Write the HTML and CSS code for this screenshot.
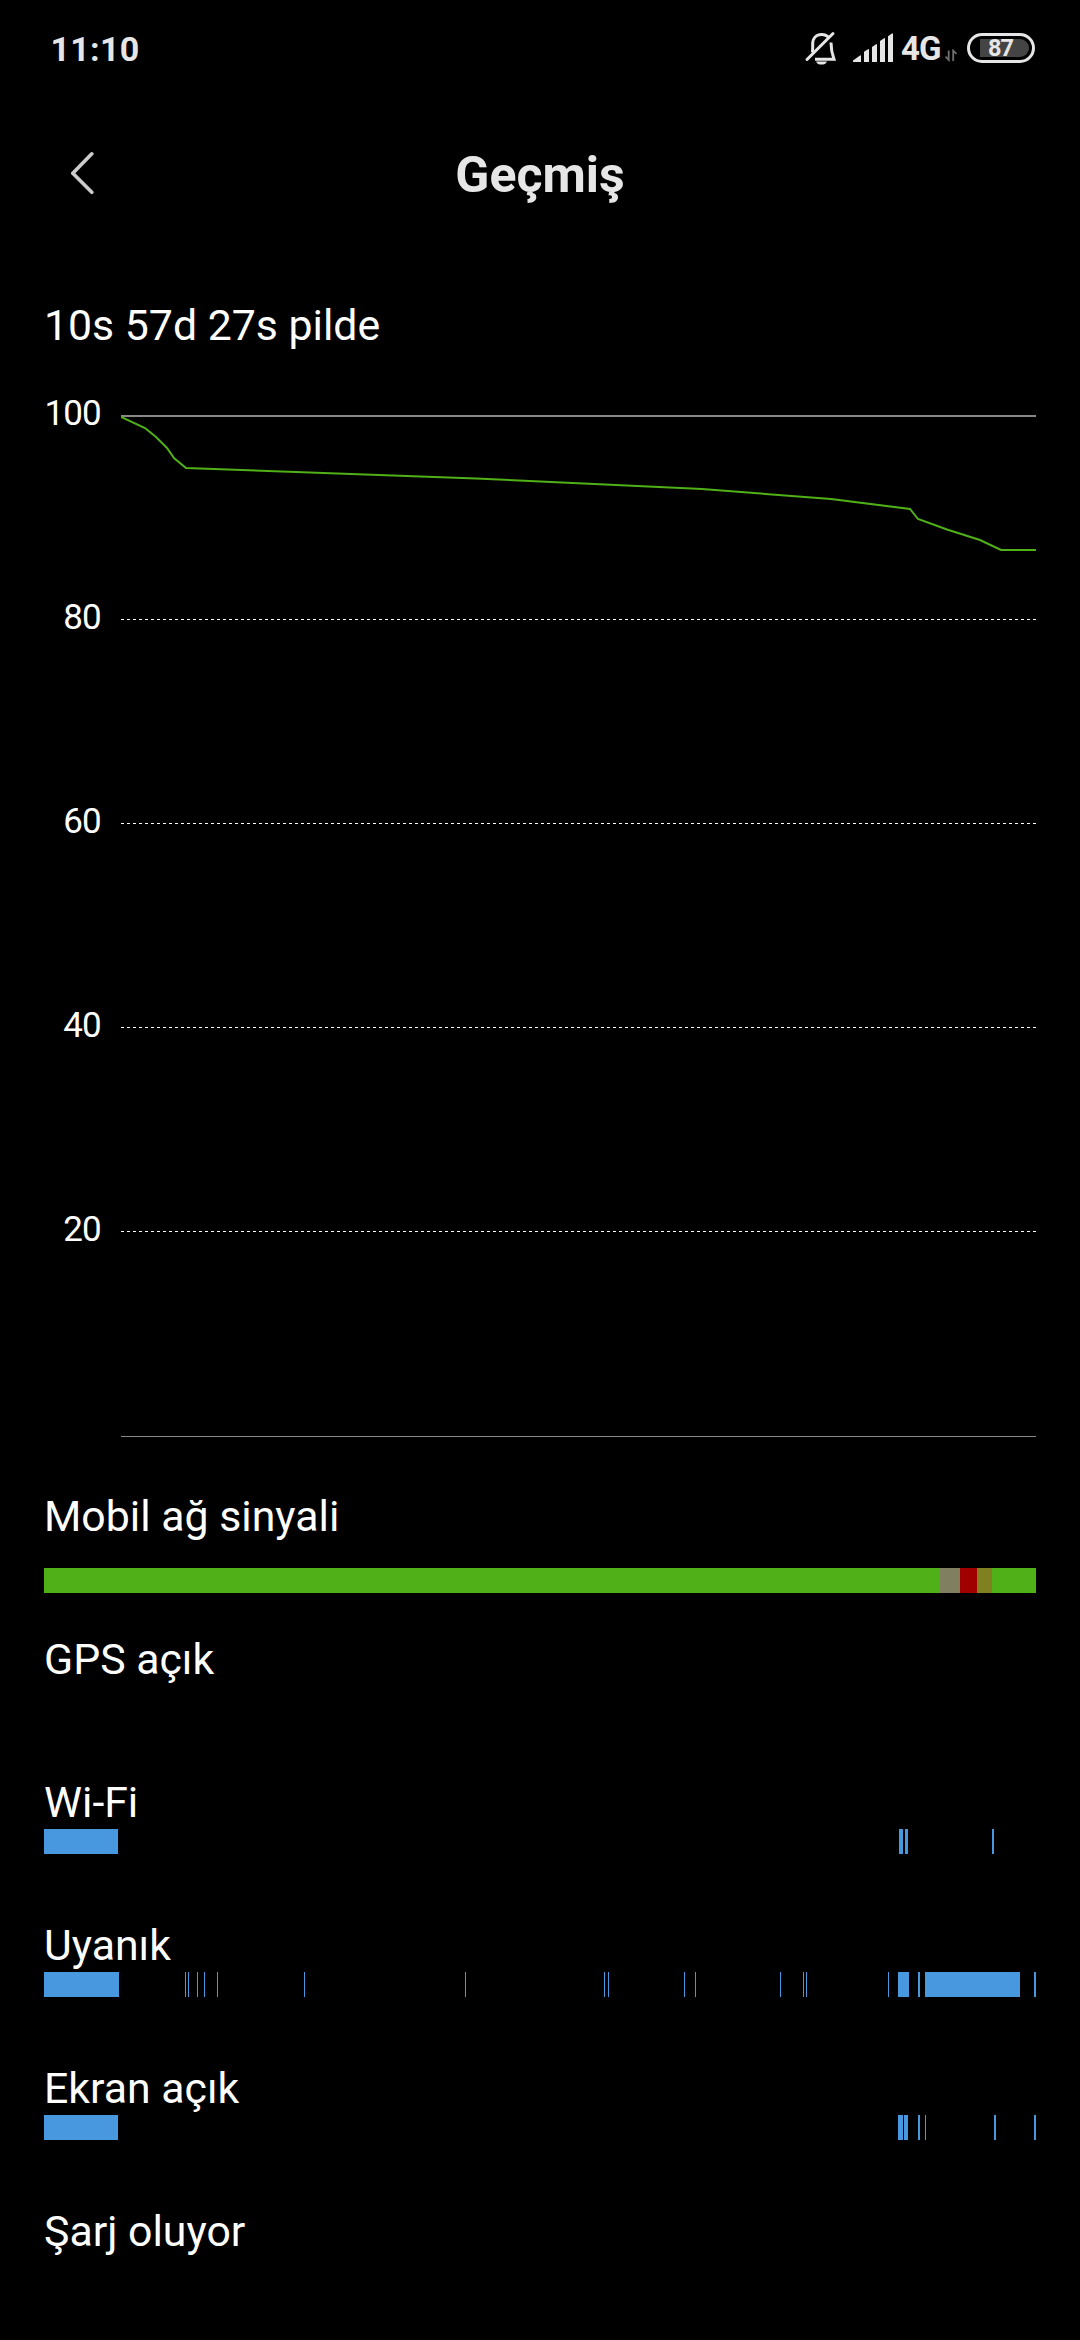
FILE: index.html
```html
<!DOCTYPE html>
<html lang="tr">
<head>
<meta charset="utf-8">
<title>Geçmiş</title>
<link rel="stylesheet" href="styles.css">
</head>
<body>
<div class="status-bar">
  <span class="clock">11:10</span>
  <div class="status-icons">
    <svg class="bell" width="34" height="34" viewBox="0 0 34 34" fill="none" stroke="#e6e6e6" stroke-width="3">
      <path d="M8.2 21.5C8.8 20 8.700 17 8.700 13C8.700 7 12.500 3.500 17.500 3.500C21 3.500 23.500 5 24.800 7"/>
      <path d="M27 11.500C27 16 27 20 30 28.300H11"/>
      <path d="M3 28.500L29 2.500" stroke-linecap="round"/>
      <path d="M12 30.500H23C22 33 20 33.500 17.500 33.500C15 33.500 13 33 12 30.500Z" fill="#e6e6e6" stroke="none"/>
    </svg>
    <svg class="signal" width="40" height="29" viewBox="0 0 40 29" fill="#e6e6e6">
      <path d="M0 29V27.500L7 22.500Q8 22 8 23V29Z"/>
      <path d="M11 29V18.800L15 16.200Q16 15.800 16 17V29Z"/>
      <path d="M19 29V14L23 11.200Q24 10.800 24 12V29Z"/>
      <path d="M27 29V8L31 5.200Q32 4.800 32 6V29Z"/>
      <path d="M35 29V3.200L39 .5Q40 0 40 1V29Z"/>
    </svg>
    <span class="network">4G</span>
    <svg class="traffic" width="12" height="13" viewBox="0 0 12 13" fill="none" stroke="#707070" stroke-width="1.800">
      <path d="M3.700 1.500V11L.5 7.500M8.200 12V1.500L11.500 5"/>
    </svg>
    <div class="battery"><span class="battery-level">87</span></div>
  </div>
</div>
<header class="title-bar">
  <svg class="back" width="24" height="44" viewBox="0 0 24 44" fill="none" stroke="#ccc" stroke-width="3.600" stroke-linecap="round" stroke-linejoin="round">
    <path d="M20.800 2.800L1.800 22.200L20.800 41.300"/>
  </svg>
  <h1 class="title">Geçmiş</h1>
</header>
<main class="content">
  <p class="label">10s 57d 27s pilde</p>
  <section class="chart">
    <div class="axis">
      <span>100</span><span>80</span><span>60</span><span>40</span><span>20</span>
    </div>
    <svg class="plot" width="915" height="1022" viewBox="0 0 915 1022">
      <path d="M0 1H915" stroke="#888" stroke-width="2"/>
      <path d="M0 204.500H915M0 408.500H915M0 612.500H915M0 816.500H915" stroke="#fff" stroke-dasharray="3 3"/>
      <path d="M0 1021.500H915" stroke="#888"/>
      <polyline fill="none" stroke="#50b018" stroke-width="2" points="0,2 24,13 35,22 46,33 53,43 65,53 355,63.500 581,74 710,84 789,94 797,104 826,114.500 859,125 880,135 915,135"/>
    </svg>
  </section>
  <section class="row row-signal">
    <p class="label">Mobil ağ sinyali</p>
    <svg class="track" width="992" height="25">
      <rect width="992" height="25" fill="#50b018"/>
      <rect x="896" width="20" height="25" fill="#808060"/>
      <rect x="916" width="17" height="25" fill="#a00000"/>
      <rect x="933" width="15" height="25" fill="#808020"/>
    </svg>
  </section>
  <section class="row">
    <p class="label">GPS açık</p>
  </section>
  <section class="row">
    <p class="label">Wi-Fi</p>
    <svg class="track" width="992" height="25">
      <path d="M0 0h74v25H0zM855 0h4v25h-4zM861 0h3v25h-3zM948 0h2v25h-2z"/>
    </svg>
  </section>
  <section class="row">
    <p class="label">Uyanık</p>
    <svg class="track" width="992" height="25">
      <path d="M0 0h75v25H0zM141 0h1v25h-1zM144 0h1v25h-1zM153 0h1v25h-1zM160 0h1v25h-1zM173 0h1v25h-1zM260 0h1v25h-1zM421 0h1v25h-1zM560 0h1v25h-1zM564 0h1v25h-1zM640 0h1v25h-1zM651 0h1v25h-1zM736 0h1v25h-1zM759 0h1v25h-1zM762 0h1v25h-1zM844 0h1v25h-1zM854 0h11v25h-11zM874 0h2v25h-2zM881 0h95v25h-95zM990 0h2v25h-2z"/>
    </svg>
  </section>
  <section class="row">
    <p class="label">Ekran açık</p>
    <svg class="track" width="992" height="25">
      <path d="M0 0h74v25H0zM854 0h5v25h-5zM860 0h4v25h-4zM874 0h2v25h-2zM881 0h1v25h-1zM950 0h2v25h-2zM990 0h2v25h-2z"/>
    </svg>
  </section>
  <section class="row">
    <p class="label">Şarj oluyor</p>
  </section>
</main>
</body>
</html>
```

FILE: styles.css
```css
* { box-sizing: border-box; margin: 0; padding: 0; }
body {
  width: 1080px;
  height: 2340px;
  overflow: hidden;
  background: #000;
  color: #fff;
  font-family: Roboto, "Noto Sans", sans-serif;
}
svg { display: block; flex: none; }

.status-bar {
  display: flex;
  justify-content: space-between;
  height: 96px;
  padding: 29px 45px 0 50.5px;
  color: #e6e6e6;
}
.clock {
  font-size: 34px;
  line-height: 40px;
  font-weight: 700;
  letter-spacing: .3px;
}
.status-icons { display: flex; align-items: flex-start; }
.bell { margin: 2px 15px 0 0; }
.signal { margin: 4px 8px 0 0; }
.network {
  width: 38px;
  font-size: 33px;
  line-height: 40px;
  font-weight: 700;
  letter-spacing: -1px;
  white-space: nowrap;
}
.traffic { margin: 20px 10px 0 6px; }
.battery {
  width: 68px;
  height: 30px;
  margin-top: 4px;
  padding: 3px;
  border: 3px solid #e6e6e6;
  border-radius: 15px;
}
.battery-level {
  display: block;
  width: 49px;
  height: 18px;
  margin-left: 7px;
  padding-left: 8px;
  background: #444;
  border-radius: 0 9px 9px 0;
  font-size: 23.5px;
  line-height: 18px;
  font-weight: 700;
  letter-spacing: -1px;
}

.title-bar {
  display: grid;
  grid-template-columns: 24px 1fr 24px;
  height: 186px;
  padding: 49px 71px 0;
}
.back { margin-top: 6px; }
.title {
  color: #e6e6e6;
  font-size: 50px;
  line-height: 60px;
  font-weight: 700;
  text-align: center;
}

.content { padding: 17px 44px 0; }
.label { font-size: 42.8px; line-height: 52px; white-space: nowrap; }

.chart { display: flex; margin-top: 64px; }
.axis {
  width: 57px;
  margin: -22px 20px 0 0;
  font-size: 35px;
  line-height: 42px;
  letter-spacing: -.8px;
  text-align: right;
}
.axis span { display: block; height: 204px; }

.row { height: 143px; }
.row-signal { margin-top: 53px; }
.track { margin-top: 1px; fill: #4898e0; shape-rendering: crispEdges; }
.row-signal .track { margin-top: 26px; }
```
